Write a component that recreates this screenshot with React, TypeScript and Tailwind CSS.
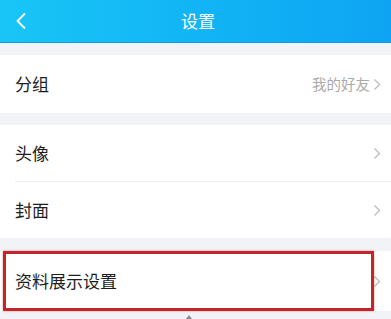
const font = { fontFamily: '"Noto Sans CJK SC", "Noto Sans", sans-serif' };

function Arrow() {
  return (
    <svg width="8" height="13" viewBox="0 0 8 13" className="shrink-0">
      <path d="M1.5 1.5 L6.5 6.5 L1.5 11.5" fill="none" stroke="#bdbdbd" strokeWidth="1.4" />
    </svg>
  );
}

function Row({ label, value, divider, h }: { label: string; value?: string; divider?: boolean; h: string }) {
  return (
    <div className="bg-white pl-[15px]">
      <div className={`flex items-center ${h} pr-[10px] ${divider ? 'border-b border-[#eeeff2]' : ''}`}>
        <span className="flex-1 text-[17px] text-[#1e1e1e]">{label}</span>
        {value && <span className="text-[14.5px] text-[#aaaaaa] mr-[3px]">{value}</span>}
        <Arrow />
      </div>
    </div>
  );
}

export default function App() {
  return (
    <div className="w-[391px] h-[319px] overflow-hidden bg-[#f2f3f6] flex flex-col" style={font}>
      <header className="h-[43px] shrink-0 flex items-center relative bg-gradient-to-r from-[#19c5f6] to-[#0ea4f3] border-b border-[#0c9ae2]">
        <svg width="12" height="18" viewBox="0 0 12 18" className="ml-[15px]">
          <path d="M10 1.5 L2.5 9 L10 16.5" fill="none" stroke="white" strokeWidth="1.8" />
        </svg>
        <span className="absolute left-0 right-0 text-center text-[17px] text-white pl-[5px]">设置</span>
      </header>

      <div className="h-[12px] shrink-0" />
      <Row label="分组" value="我的好友" h="h-[58px]" />
      <div className="h-[12px] shrink-0" />
      <Row label="头像" divider h="h-[57px]" />
      <Row label="封面" h="h-[56px]" />
      <div className="h-[13px] shrink-0" />
      <div className="relative">
        <Row label="资料展示设置" h="h-[60px]" />
        <div className="absolute left-[3px] top-0 w-[371px] h-[60px] border-[3px] border-[#c2262a] shadow-[0_0_2px_rgba(194,38,42,0.5)]" />
      </div>
      <div className="flex-1 flex justify-center items-end">
        <div className="w-0 h-0 border-l-[3px] border-r-[3px] border-b-[4px] border-l-transparent border-r-transparent border-b-[#8a8a8a] mr-[14px]" />
      </div>
    </div>
  );
}
